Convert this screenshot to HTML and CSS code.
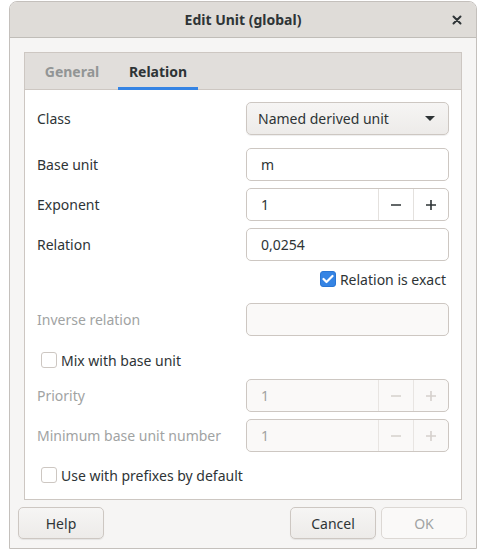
FILE: index.html
```html
<!DOCTYPE html>
<html>
<head>
<meta charset="utf-8">
<link rel="stylesheet" href="styles.css">
</head>
<body>
<div class="window">
  <div class="titlebar">
    <span class="title">Edit Unit (global)</span>
    <span class="close">
      <svg width="10" height="10" viewBox="0 0 10 10"><path d="M1.5 1.5 L8.5 8.5 M8.5 1.5 L1.5 8.5" stroke="#2e3436" stroke-width="2" stroke-linecap="round"/></svg>
    </span>
  </div>
  <div class="body">
    <div class="notebook">
      <div class="tabs">
        <div class="tab">General</div>
        <div class="tab active">Relation</div>
      </div>
      <div class="page">
        <div class="row r-class">
          <span class="label">Class</span>
          <div class="combo"><span>Named derived unit</span>
            <svg width="10" height="6" viewBox="0 0 10 6"><path d="M0 0 L10 0 L5 5 Z" fill="#2e3436"/></svg>
          </div>
        </div>
        <div class="row">
          <span class="label">Base unit</span>
          <div class="entry">m</div>
        </div>
        <div class="row">
          <span class="label">Exponent</span>
          <div class="spin">
            <span class="val">1</span>
            <span class="btn"><svg width="12" height="12" viewBox="0 0 12 12"><path d="M1 6 H11" stroke="currentColor" stroke-width="1.6"/></svg></span>
            <span class="btn"><svg width="12" height="12" viewBox="0 0 12 12"><path d="M1 6 H11 M6 1 V11" stroke="currentColor" stroke-width="1.6"/></svg></span>
          </div>
        </div>
        <div class="row">
          <span class="label">Relation</span>
          <div class="entry">0,0254</div>
        </div>
        <div class="exact">
          <span class="check on"><svg width="12" height="10" viewBox="0 0 12 10"><path d="M1.5 5 L4.5 8 L10.5 2" stroke="#fff" stroke-width="2.2" fill="none" stroke-linecap="round" stroke-linejoin="round"/></svg></span>
          <span>Relation is exact</span>
        </div>
        <div class="row r-inverse">
          <span class="label dis">Inverse relation</span>
          <div class="entry disabled"></div>
        </div>
        <div class="checkrow r-mix">
          <span class="check"></span>
          <span>Mix with base unit</span>
        </div>
        <div class="row r-prio">
          <span class="label dis">Priority</span>
          <div class="spin disabled">
            <span class="val">1</span>
            <span class="btn"><svg width="12" height="12" viewBox="0 0 12 12"><path d="M1 6 H11" stroke="currentColor" stroke-width="1.6"/></svg></span>
            <span class="btn"><svg width="12" height="12" viewBox="0 0 12 12"><path d="M1 6 H11 M6 1 V11" stroke="currentColor" stroke-width="1.6"/></svg></span>
          </div>
        </div>
        <div class="row">
          <span class="label dis">Minimum base unit number</span>
          <div class="spin disabled">
            <span class="val">1</span>
            <span class="btn"><svg width="12" height="12" viewBox="0 0 12 12"><path d="M1 6 H11" stroke="currentColor" stroke-width="1.6"/></svg></span>
            <span class="btn"><svg width="12" height="12" viewBox="0 0 12 12"><path d="M1 6 H11 M6 1 V11" stroke="currentColor" stroke-width="1.6"/></svg></span>
          </div>
        </div>
        <div class="checkrow r-prefix">
          <span class="check"></span>
          <span>Use with prefixes by default</span>
        </div>
      </div>
    </div>
    <div class="buttons">
      <div class="button">Help</div>
      <div class="spacer"></div>
      <div class="button">Cancel</div>
      <div class="button disabled">OK</div>
    </div>
  </div>
</div>
</body>
</html>
```

FILE: styles.css
```css
html, body {
  margin: 0;
  padding: 0;
  background: #ffffff;
}
body {
  font-family: "Noto Sans", "Open Sans", sans-serif;
  font-size: 14px;
  color: #2e3436;
  padding: 1px 0 0 9px;
}
.window {
  width: 466px;
  height: 546px;
  border: 1px solid #c4c0bc;
  border-radius: 8px 8px 0 0;
  background: #f6f5f4;
  display: flex;
  flex-direction: column;
  overflow: hidden;
}
.titlebar {
  height: 35px;
  background: #dfdcd8;
  border-bottom: 1px solid #c0bdb8;
  display: flex;
  align-items: center;
  justify-content: center;
  position: relative;
}
.title {
  font-weight: bold;
  font-size: 14px;
  color: #2e3436;
}
.close {
  position: absolute;
  right: 14px;
  top: 13px;
  width: 10px;
  height: 10px;
  display: flex;
}
.body {
  padding: 14px 9px 0 8px;
  display: flex;
  flex-direction: column;
}
.notebook {
  margin: 0 5px 0 6px;
  border: 1px solid #cdc7c2;
  background: #ffffff;
}
.tabs {
  height: 36px;
  background: #e1dedb;
  border-bottom: 1px solid #cdc7c2;
  display: flex;
  padding-left: 7px;
  gap: 6px;
}
.tab {
  width: 80px;
  display: flex;
  align-items: center;
  justify-content: center;
  font-weight: bold;
  color: #929595;
  position: relative;
}
.tab.active {
  color: #2e3436;
}
.tab.active::after {
  content: "";
  position: absolute;
  left: 0;
  right: 0;
  bottom: -1px;
  height: 3px;
  background: #3584e4;
}
.page {
  padding: 12px 12px 14px 12px;
  display: flex;
  flex-direction: column;
}
.row {
  display: flex;
  align-items: center;
  justify-content: space-between;
  margin-bottom: 7px;
}
.r-class { margin-bottom: 13px; }
.label {
  color: #2e3436;
}
.label.dis {
  color: #a1a3a3;
}
.combo, .entry, .spin {
  width: 201px;
  height: 31px;
  border: 1px solid #cdc7c2;
  border-radius: 5px;
  box-sizing: content-box;
}
.combo {
  background: linear-gradient(#f6f5f4, #edebe9);
  box-shadow: 0 1px 1px rgba(0,0,0,0.07);
  display: flex;
  align-items: center;
  justify-content: space-between;
}
.combo span { padding-left: 11px; }
.combo svg { margin-right: 13px; }
.entry {
  background: #ffffff;
  display: flex;
  align-items: center;
  text-indent: 14px;
}
.entry.disabled {
  background: #faf9f8;
}
.spin {
  display: flex;
  background: #ffffff;
  overflow: hidden;
}
.spin .val {
  flex: 1;
  display: flex;
  align-items: center;
  padding-left: 14px;
}
.spin .btn {
  width: 34px;
  display: flex;
  align-items: center;
  justify-content: center;
  border-left: 1px solid #e4e1de;
  color: #2e3436;
}
.spin.disabled {
  background: #faf9f8;
  color: #a1a3a3;
}
.spin.disabled .btn {
  color: #d5d0cc;
  border-left-color: #e8e5e2;
}
.exact {
  display: flex;
  align-items: center;
  justify-content: flex-end;
  gap: 4px;
  height: 20px;
  margin: 1px 3px 14px 0;
}
.check {
  width: 14px;
  height: 14px;
  border: 1px solid #cdc7c2;
  border-radius: 3px;
  background: #ffffff;
  display: flex;
  align-items: center;
  justify-content: center;
}
.check.on {
  background: #3584e4;
  border-color: #2a76d4;
}
.checkrow {
  display: flex;
  align-items: center;
  gap: 4px;
  padding-left: 4px;
  height: 20px;
}
.r-mix { margin: 7px 0 9px 0; }
.r-prefix { margin-top: 6px; }
.buttons {
  display: flex;
  margin-top: 7px;
  gap: 5px;
}
.spacer { flex: 1; }
.button {
  width: 84px;
  height: 30px;
  border: 1px solid #cdc7c2;
  border-radius: 5px;
  background: linear-gradient(#f6f5f4, #edebe9);
  box-shadow: 0 1px 1px rgba(0,0,0,0.07);
  display: flex;
  align-items: center;
  justify-content: center;
}
.button.disabled {
  background: #faf9f8;
  color: #a1a3a3;
  box-shadow: none;
  border-color: #dcd8d4;
}
```
